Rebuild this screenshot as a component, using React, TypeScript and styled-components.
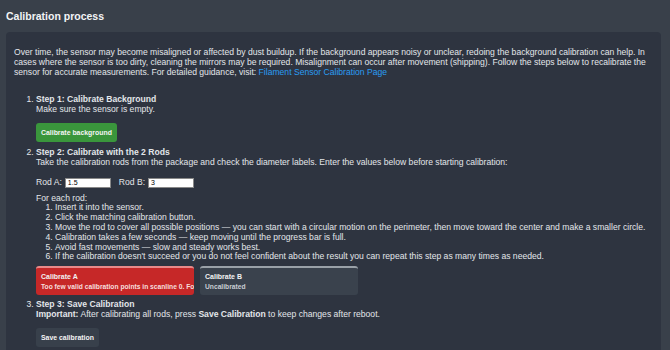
import styled, { createGlobalStyle } from "styled-components";

const GlobalStyle = createGlobalStyle`
  html, body {
    margin: 0;
    padding: 0;
    background: #39404a;
    font-family: "Liberation Sans", Arial, sans-serif;
    overflow: hidden;
  }
`;

const Page = styled.div`
  padding: 9px 9px 0 6px;
  height: 350px;
  box-sizing: border-box;
  color: #e3e6ea;
`;

const Title = styled.h2`
  margin: 0 0 9px 0;
  font-size: 10.5px;
  font-weight: bold;
  color: #f2f4f6;
  line-height: 14px;
`;

const Card = styled.div`
  background: #2e3440;
  border-radius: 4px;
  padding: 16px 8px 20px 8px;
  font-size: 8.6px;
  line-height: 9.8px;
`;

const Intro = styled.p`
  margin: 0 0 18px 0;
  a {
    color: #2a9df4;
    text-decoration: none;
  }
`;

const Steps = styled.ol`
  margin: 0;
  padding-left: 22px;
  > li {
    margin-bottom: 3px;
  }
`;

const StepTitle = styled.div`
  font-weight: bold;
`;

const ButtonRow = styled.div`
  display: flex;
  gap: 6px;
  margin: 8px 0 6px 0;
`;

const Button = styled.button<{ $bg: string }>`
  background: ${(p) => p.$bg};
  border: none;
  border-radius: 3px;
  color: #f4f4f4;
  font-family: inherit;
  font-size: 6.9px;
  font-weight: bold;
  height: 19px;
  padding: 0 5px;
  cursor: pointer;
`;

const RodRow = styled.div`
  display: flex;
  align-items: center;
  margin: 10px 0 6px 0;
  gap: 3px;
`;

const RodLabel = styled.label<{ $first?: boolean }>`
  margin-left: ${(p) => (p.$first ? "0" : "5px")};
`;

const RodInput = styled.input`
  width: 46px;
  height: 10px;
  box-sizing: border-box;
  border: 1px solid #888;
  padding: 0 2px;
  font-family: inherit;
  font-size: 7px;
  color: #000;
  background: #fff;
`;

const SubList = styled.ol`
  margin: 0;
  padding-left: 19px;
`;

const CalRow = styled.div`
  display: flex;
  gap: 6px;
  margin: 4px 0 5px 0;
`;

const CalBox = styled.div<{ $bg: string; $edge: string }>`
  width: 158px;
  height: 29px;
  box-sizing: border-box;
  background: ${(p) => p.$bg};
  border-top: 2px solid ${(p) => p.$edge};
  border-radius: 3px;
  padding: 4px 5px 0 5px;
  font-size: 7px;
  font-weight: bold;
  line-height: 10px;
  color: #f2f2f2;
  overflow: hidden;
  white-space: nowrap;
`;

const CalSub = styled.div<{ $muted?: boolean }>`
  font-size: 6.7px;
  color: ${(p) => (p.$muted ? "#c9ced4" : "#f6dede")};
`;

export default function App() {
  return (
    <Page>
      <GlobalStyle />
      <Title>Calibration process</Title>
      <Card>
        <Intro>
          Over time, the sensor may become misaligned or affected by dust buildup. If the background
          appears noisy or unclear, redoing the background calibration can help. In cases where the
          sensor is too dirty, cleaning the mirrors may be required. Misalignment can occur after
          movement (shipping). Follow the steps below to recalibrate the sensor for accurate
          measurements. For detailed guidance, visit:{" "}
          <a href="#">Filament Sensor Calibration Page</a>
        </Intro>
        <Steps>
          <li>
            <StepTitle>Step 1: Calibrate Background</StepTitle>
            Make sure the sensor is empty.
            <ButtonRow>
              <Button $bg="#3a963c">Calibrate background</Button>
            </ButtonRow>
          </li>
          <li>
            <StepTitle>Step 2: Calibrate with the 2 Rods</StepTitle>
            Take the calibration rods from the package and check the diameter labels. Enter the
            values below before starting calibration:
            <RodRow>
              <RodLabel $first>Rod A:</RodLabel>
              <RodInput defaultValue="1.5" />
              <RodLabel>Rod B:</RodLabel>
              <RodInput defaultValue="3" />
            </RodRow>
            For each rod:
            <SubList>
              <li>Insert it into the sensor.</li>
              <li>Click the matching calibration button.</li>
              <li>
                Move the rod to cover all possible positions — you can start with a circular motion
                on the perimeter, then move toward the center and make a smaller circle.
              </li>
              <li>Calibration takes a few seconds — keep moving until the progress bar is full.</li>
              <li>Avoid fast movements — slow and steady works best.</li>
              <li>
                If the calibration doesn't succeed or you do not feel confident about the result you
                can repeat this step as many times as needed.
              </li>
            </SubList>
            <CalRow>
              <CalBox $bg="#c62828" $edge="#e88a8a">
                Calibrate A
                <CalSub>Too few valid calibration points in scanline 0. Found 3, need 10.</CalSub>
              </CalBox>
              <CalBox $bg="#3a424d" $edge="#9aa1a8">
                Calibrate B
                <CalSub $muted>Uncalibrated</CalSub>
              </CalBox>
            </CalRow>
          </li>
          <li>
            <StepTitle>Step 3: Save Calibration</StepTitle>
            <b>Important:</b> After calibrating all rods, press <b>Save Calibration</b> to keep
            changes after reboot.
            <ButtonRow>
              <Button $bg="#38404b">Save calibration</Button>
            </ButtonRow>
          </li>
        </Steps>
      </Card>
    </Page>
  );
}
